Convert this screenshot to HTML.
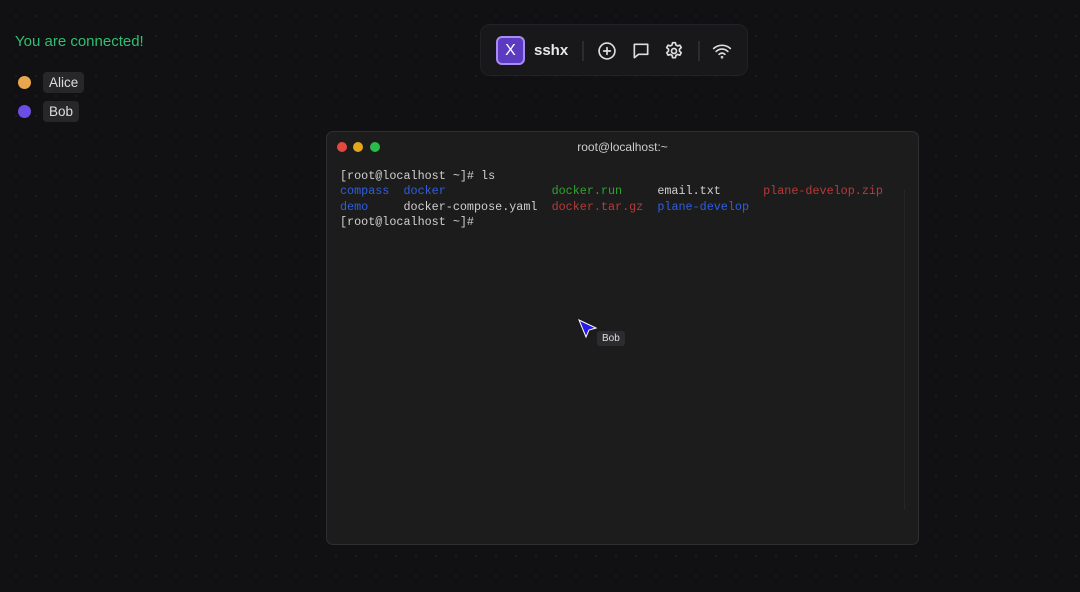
<!DOCTYPE html>
<html><head><meta charset="utf-8"><style>
*{margin:0;padding:0;box-sizing:border-box}
body{width:1080px;height:592px;overflow:hidden;background:#111113;background-image:radial-gradient(circle,#222226 0.7px,transparent 1.1px);background-size:20px 20px;background-position:6px 6px;font-family:"Liberation Sans",sans-serif;position:relative}
.conn{position:absolute;left:15px;top:33px;color:#2fbf71;font-size:15px}
.user{position:absolute;left:18px;display:flex;align-items:center}
.dot{width:13px;height:13px;border-radius:50%;margin-right:12px}
.tag{background:#27272a;color:#ddd;font-size:13.5px;padding:3px 6px;border-radius:4px}
.bar{position:absolute;left:480px;top:24px;width:268px;height:52px;background:#18181b;border:1px solid #222226;border-radius:10px}
.logo{position:absolute;left:15px;top:11px;width:29px;height:29px;border-radius:6px;background:#5b3bc2;border:2px solid #a98bf0;color:#fff;font-size:16px;text-align:center;line-height:25px}
.name{position:absolute;left:53px;top:17px;color:#e8e8e8;font-weight:bold;font-size:15px}
.sep{position:absolute;top:16px;width:2px;height:20px;background:#2c2c30}
.ic{position:absolute;top:16px}
.term{position:absolute;left:326px;top:131px;width:593px;height:414px;background:#1c1c1c;border:1px solid #2e2e2e;border-radius:7px}
.title{position:absolute;top:8px;left:0;width:100%;text-align:center;color:#ccc;font-size:12px}
.l{position:absolute;top:10px;width:10px;height:10px;border-radius:50%}
pre{position:absolute;left:13px;top:37px;font-family:"Liberation Mono",monospace;font-size:11.75px;line-height:15.3px;color:#cfcfcf}
.b{color:#2f5fe0}.g{color:#2ea62e}.r{color:#b83a3a}
</style></head><body>
<div class="conn">You are connected!</div>
<div class="user" style="top:72px"><div class="dot" style="background:#e8a64e"></div><span class="tag">Alice</span></div>
<div class="user" style="top:101px"><div class="dot" style="background:#6a4ee6"></div><span class="tag">Bob</span></div>
<div class="bar">
<div class="logo">X</div><div class="name">sshx</div>
<div class="sep" style="left:101px"></div>
<svg class="ic" style="left:116px" width="20" height="20" viewBox="0 0 24 24" fill="none" stroke="#ddd" stroke-width="2" stroke-linecap="round"><circle cx="12" cy="12" r="9.5"/><path d="M12 8v8M8 12h8"/></svg>
<svg class="ic" style="left:150px" width="20" height="20" viewBox="0 0 24 24" fill="none" stroke="#ddd" stroke-width="2" stroke-linejoin="round"><path d="M4 4h16v12H9l-5 4z"/></svg>
<svg class="ic" style="left:183px" width="20" height="20" viewBox="0 0 24 24" fill="none" stroke="#ddd" stroke-width="2" stroke-linejoin="round"><circle cx="12" cy="12" r="3"/><path d="M10.3 2h3.4l.6 2.8 2 1.1 2.7-.9 1.7 2.9-2.1 1.9v2.4l2.1 1.9-1.7 2.9-2.7-.9-2 1.1-.6 2.8h-3.4l-.6-2.8-2-1.1-2.7.9-1.7-2.9 2.1-1.9V9.8L3.2 7.9l1.7-2.9 2.7.9 2-1.1z"/></svg>
<div class="sep" style="left:217px"></div>
<svg class="ic" style="left:231px" width="20" height="20" viewBox="0 0 24 24" fill="none" stroke="#ddd" stroke-width="2" stroke-linecap="round"><path d="M2 9a15 15 0 0 1 20 0M5 12.5a10 10 0 0 1 14 0M8.5 16a5 5 0 0 1 7 0"/><circle cx="12" cy="19.5" r=".6"/></svg>
</div>
<div class="term">
<div class="l" style="left:10px;background:#e5483f"></div><div class="l" style="left:26px;background:#e3a51a"></div><div class="l" style="left:43px;background:#2bbb4a"></div>
<div class="title">root@localhost:~</div>
<div style="position:absolute;left:577px;top:58px;width:1px;height:320px;background:#262626"></div>
<pre>[root@localhost ~]# ls
<span class="b">compass</span>  <span class="b">docker</span>               <span class="g">docker.run</span>     email.txt      <span class="r">plane-develop.zip</span>
<span class="b">demo</span>     docker-compose.yaml  <span class="r">docker.tar.gz</span>  <span class="b">plane-develop</span>
[root@localhost ~]#</pre>
</div>
<svg style="position:absolute;left:578px;top:319px" width="20" height="20" viewBox="0 0 20 20"><path d="M1 1l17 8-7 2-3 7z" fill="#2a1ae6" stroke="#fff" stroke-width="1"/></svg>
<div style="position:absolute;left:597px;top:331px;background:#2c2c30;color:#ddd;font-size:10px;padding:2px 5px;border-radius:3px">Bob</div>
</body></html>
